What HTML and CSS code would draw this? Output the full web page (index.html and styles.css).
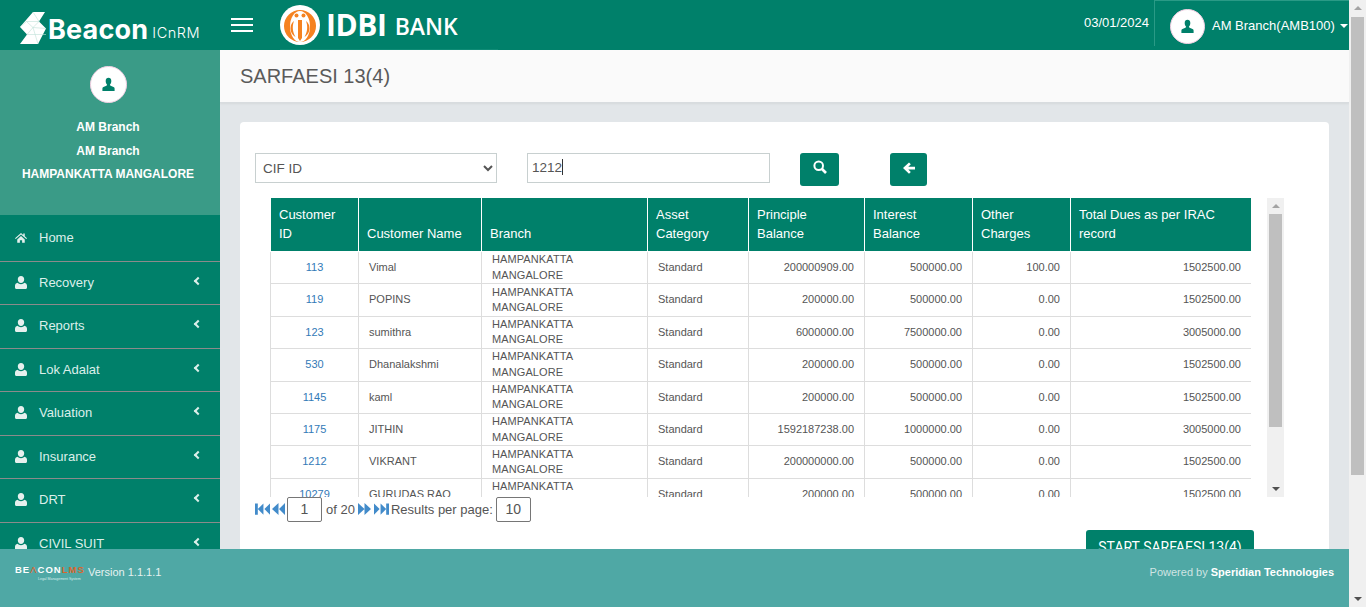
FILE: index.html
```html
<!doctype html>
<html>
<head>
<meta charset="UTF-8">
<title>SARFAESI 13(4)</title>
<link rel="stylesheet" href="styles.css">
</head>
<body>
<svg class="defs" width="0" height="0">
	<symbol id="user" viewBox="0 0 16 16"><path d="M5 4.200C5 2 6.200 .8 8 .8s3 1.200 3 3.400c0 1.700-.7 3.200-1.500 4 .1.700.5 1 1.300 1.300 1.800.6 3.700 1.100 3.700 2.700v2.800H1.500v-2.800c0-1.600 1.900-2.100 3.700-2.700.8-.3 1.200-.6 1.300-1.300C5.700 7.400 5 5.900 5 4.200z"/></symbol>
	<symbol id="user-solid" viewBox="0 0 12 13"><path d="M6 0c2 0 3.200 1.300 3.200 3.200C9.200 5.200 7.800 7 6 7S2.800 5.200 2.800 3.200C2.800 1.300 4 0 6 0zM2.500 6.800C3.300 7.700 4.600 8.200 6 8.200s2.700-.5 3.500-1.400C11 7.200 12 8.300 12 9.800V11.500c0 .9-.6 1.500-1.500 1.500h-9C.6 13 0 12.400 0 11.500V9.800c0-1.500 1-2.600 2.500-3z"/></symbol>
	<symbol id="first" viewBox="0 0 16 12"><path d="M0 0h3v12H0zM9 0v12L3 6zM16 0v12L10 6z"/></symbol>
	<symbol id="prev" viewBox="0 0 13 12"><path d="M6.500 0v12L0 6zM13 0v12L7 6z"/></symbol>
	<symbol id="next" viewBox="0 0 13 12"><path d="M0 0v12l6.500-6zM6.500 0v12L13 6z"/></symbol>
	<symbol id="last" viewBox="0 0 16 12"><path d="M0 0v12l6-6zM7 0v12l6-6zM13 0h3v12h-3z"/></symbol>
</svg>
<div class="page">
	<header class="topbar">
		<div class="brand">
			<svg class="brand-mark" viewBox="0 0 26 32">
				<path fill="#fff" d="M13 0h12l-6 9.500 7 7L18 32H0l7-9.500-7-7.500z"/>
				<path fill="none" stroke="#bfe0d8" stroke-width=".6" d="M13 0l6 9.500H6.500M6.500 9.500L0 15M6.500 9.500L13 15.500l6-6M13 15.500L26 16.500M13 15.500L7 22.500M13 15.500l5 16.500M7 22.500h19"/>
			</svg>
			<span class="brand-name">Beacon</span>
			<span class="brand-sub">ICnRM</span>
		</div>
		<div class="burger"><i></i><i></i><i></i></div>
		<div class="bank">
			<svg class="bank-mark" viewBox="0 0 40 40">
				<circle cx="20" cy="20" r="20" fill="#fff"/>
				<circle cx="20" cy="21" r="16" fill="#f58220"/>
				<ellipse cx="20" cy="21.500" rx="10" ry="15.500" fill="#fff"/>
				<path fill="#f58220" d="M14 16c-2 5-1.500 11 1.500 16-4-2.500-5-6-5-9 0-3 1.500-5.500 3.500-7zM26 16c2 5 1.500 11-1.500 16 4-2.500 5-6 5-9 0-3-1.500-5.500-3.500-7z"/>
				<path fill="#f58220" d="M18 15h4v18l-2 3-2-3z"/>
				<circle cx="16.500" cy="10.500" r="2" fill="#f58220"/>
				<circle cx="23.500" cy="10.500" r="2" fill="#f58220"/>
			</svg>
			<span class="bank-idbi">IDBI</span>
			<span class="bank-word">BANK</span>
		</div>
		<div class="date">03/01/2024</div>
		<div class="account">
			<div class="avatar avatar-small"><svg><use href="#user"/></svg></div>
			<span class="account-name">AM Branch(AMB100)</span>
			<span class="caret"></span>
		</div>
	</header>
	<div class="middle">
		<aside class="sidebar">
			<div class="profile">
				<div class="avatar"><svg><use href="#user"/></svg></div>
				<p>AM Branch</p>
				<p>AM Branch</p>
				<p>HAMPANKATTA MANGALORE</p>
			</div>
			<nav class="menu">
				<a class="menu-item menu-home">
					<svg class="menu-icon" viewBox="0 0 16 14"><path d="M8 1L0 8l1 1 7-6 7 6 1-1-3-2.600V1.500h-2v2.200zM3 9.500V14h3.500v-3.500h3V14H13V9.500L8 5z"/></svg>
					Home
				</a>
				<a class="menu-item"><svg class="menu-icon"><use href="#user-solid"/></svg>Recovery<span class="chev"></span></a>
				<a class="menu-item"><svg class="menu-icon"><use href="#user-solid"/></svg>Reports<span class="chev"></span></a>
				<a class="menu-item"><svg class="menu-icon"><use href="#user-solid"/></svg>Lok Adalat<span class="chev"></span></a>
				<a class="menu-item"><svg class="menu-icon"><use href="#user-solid"/></svg>Valuation<span class="chev"></span></a>
				<a class="menu-item"><svg class="menu-icon"><use href="#user-solid"/></svg>Insurance<span class="chev"></span></a>
				<a class="menu-item"><svg class="menu-icon"><use href="#user-solid"/></svg>DRT<span class="chev"></span></a>
				<a class="menu-item"><svg class="menu-icon"><use href="#user-solid"/></svg>CIVIL SUIT<span class="chev"></span></a>
			</nav>
		</aside>
		<main class="content">
			<div class="title-bar"><h1>SARFAESI 13(4)</h1></div>
			<section class="card">
				<div class="filters">
					<select class="field field-select"><option>CIF ID</option></select>
					<div class="field field-input">1212<span class="cursor"></span></div>
					<button class="btn btn-search">
						<svg viewBox="0 0 14 14"><circle cx="5.700" cy="5.700" r="4.300" fill="none" stroke="#fff" stroke-width="2"/><path d="M9 9l4 4" stroke="#fff" stroke-width="2.600"/></svg>
					</button>
					<button class="btn btn-back">
						<svg viewBox="0 0 14 14"><path fill="#fff" d="M7 1.500l1.800 1.800L6.300 5.700H13v2.800H6.300l2.500 2.400L7 12.700 1 7z"/></svg>
					</button>
				</div>
				<div class="grid-row">
					<div class="table-view">
						<table class="cases">
							<colgroup>
								<col class="c1"><col class="c2"><col class="c3"><col class="c4"><col class="c5"><col class="c6"><col class="c7"><col class="c8">
							</colgroup>
							<thead>
								<tr><th>Customer ID</th><th>Customer Name</th><th>Branch</th><th>Asset Category</th><th>Principle Balance</th><th>Interest Balance</th><th>Other Charges</th><th>Total Dues as per IRAC record</th></tr>
							</thead>
							<tbody>
								<tr><td class="id">113</td><td>Vimal</td><td class="branch">HAMPANKATTA MANGALORE</td><td>Standard</td><td class="num">200000909.00</td><td class="num">500000.00</td><td class="num">100.00</td><td class="num">1502500.00</td></tr>
								<tr><td class="id">119</td><td>POPINS</td><td class="branch">HAMPANKATTA MANGALORE</td><td>Standard</td><td class="num">200000.00</td><td class="num">500000.00</td><td class="num">0.00</td><td class="num">1502500.00</td></tr>
								<tr><td class="id">123</td><td>sumithra</td><td class="branch">HAMPANKATTA MANGALORE</td><td>Standard</td><td class="num">6000000.00</td><td class="num">7500000.00</td><td class="num">0.00</td><td class="num">3005000.00</td></tr>
								<tr><td class="id">530</td><td>Dhanalakshmi</td><td class="branch">HAMPANKATTA MANGALORE</td><td>Standard</td><td class="num">200000.00</td><td class="num">500000.00</td><td class="num">0.00</td><td class="num">1502500.00</td></tr>
								<tr><td class="id">1145</td><td>kaml</td><td class="branch">HAMPANKATTA MANGALORE</td><td>Standard</td><td class="num">200000.00</td><td class="num">500000.00</td><td class="num">0.00</td><td class="num">1502500.00</td></tr>
								<tr><td class="id">1175</td><td>JITHIN</td><td class="branch">HAMPANKATTA MANGALORE</td><td>Standard</td><td class="num">1592187238.00</td><td class="num">1000000.00</td><td class="num">0.00</td><td class="num">3005000.00</td></tr>
								<tr><td class="id">1212</td><td>VIKRANT</td><td class="branch">HAMPANKATTA MANGALORE</td><td>Standard</td><td class="num">200000000.00</td><td class="num">500000.00</td><td class="num">0.00</td><td class="num">1502500.00</td></tr>
								<tr><td class="id">10279</td><td>GURUDAS RAO</td><td class="branch">HAMPANKATTA MANGALORE</td><td>Standard</td><td class="num">200000.00</td><td class="num">500000.00</td><td class="num">0.00</td><td class="num">1502500.00</td></tr>
							</tbody>
						</table>
					</div>
					<div class="scroller scroller-inner">
						<span class="arrow-up"></span>
						<span class="thumb"></span>
						<span class="arrow-down"></span>
					</div>
				</div>
				<div class="pager">
					<svg class="pg pg-first"><use href="#first"/></svg>
					<svg class="pg pg-prev"><use href="#prev"/></svg>
					<span class="pg-box">1</span>
					<span class="pg-of">of 20</span>
					<svg class="pg pg-prev"><use href="#next"/></svg>
					<svg class="pg pg-first pg-last"><use href="#last"/></svg>
					<span class="pg-label">Results per page:</span>
					<span class="pg-box">10</span>
				</div>
				<div class="actions"><button class="btn-start">START SARFAESI 13(4)</button></div>
			</section>
		</main>
	</div>
	<footer class="footer">
		<div class="footer-left">
			<div class="lms">
				<span class="lms-name">BE<b>&#923;</b>CON<em>LMS</em></span>
				<span class="lms-tag">Legal Management System</span>
			</div>
			<span class="version">Version 1.1.1.1</span>
		</div>
		<div class="powered">Powered by <strong>Speridian Technologies</strong></div>
	</footer>
</div>
<div class="scroller scroller-page">
	<span class="arrow-up"></span>
	<span class="thumb"></span>
	<span class="arrow-down"></span>
</div>
</body>
</html>
```

FILE: styles.css
```css
* {
	box-sizing: border-box;
	font-family: "Liberation Sans", Arial, sans-serif;
}
html, body {
	height: 100%;
}
body {
	margin: 0;
	display: flex;
	overflow: hidden;
	color: #555555;
}
.defs {
	position: absolute;
}
.page {
	flex: 1;
	min-width: 0;
	display: flex;
	flex-direction: column;
	height: 607px;
}

/* top bar */
.topbar {
	height: 50px;
	flex: none;
	display: flex;
	align-items: center;
	background-color: #00806a;
	color: #ffffff;
}
.brand {
	width: 220px;
	flex: none;
	display: flex;
	align-items: flex-end;
	padding-left: 20px;
	height: 40px;
}
.brand-mark {
	width: 26px;
	height: 32px;
	margin-bottom: 1px;
}
.brand-name {
	font-family: Inter, sans-serif;
	font-weight: 700;
	font-size: 27px;
	line-height: 30px;
	margin-left: 2px;
	letter-spacing: 0.2px;
}
.brand-sub {
	font-family: Inter, sans-serif;
	font-weight: 300;
	font-size: 14.500px;
	line-height: 25px;
	letter-spacing: 0.5px;
	margin-left: 4px;
}
.burger {
	width: 22px;
	margin-left: 11px;
	flex: none;
}
.burger i {
	display: block;
	height: 2px;
	background-color: #ffffff;
	margin: 4px 0;
}
.bank {
	display: flex;
	align-items: center;
	margin-left: 27px;
	align-self: flex-end;
	height: 50px;
	width: 218px;
	border-bottom: 1px solid #0f8b76;
}
.bank-mark {
	width: 40px;
	height: 40px;
	flex: none;
}
.bank-idbi {
	font-family: "Open Sans", sans-serif;
	font-weight: 700;
	font-size: 30px;
	line-height: 40px;
	margin-left: 6px;
	letter-spacing: -0.4px;
}
.bank-word {
	font-family: "Open Sans", sans-serif;
	font-weight: 600;
	font-size: 23px;
	line-height: 40px;
	margin-left: 8px;
	padding-top: 3px;
}
.date {
	margin-left: auto;
	font-size: 13px;
	margin-right: 5px;
	padding-bottom: 6px;
}
.account {
	width: 195px;
	height: 46px;
	align-self: flex-start;
	flex: none;
	display: flex;
	align-items: center;
	padding-left: 15px;
	border-left: 1px solid #2a9a86;
	border-top: 1px solid #2a9a86;
}
.account-name {
	font-size: 13px;
	margin-left: 7px;
	padding-top: 3px;
	white-space: nowrap;
}
.caret {
	border-left: 4px solid transparent;
	border-right: 4px solid transparent;
	border-top: 4px solid #ffffff;
	margin-left: 5px;
	margin-top: 4px;
}
.avatar {
	width: 37px;
	height: 37px;
	border-radius: 50%;
	background-color: #ffffff;
	border: 1px solid #f3cfe3;
	display: flex;
	align-items: center;
	justify-content: center;
	margin: 0 auto;
	flex: none;
}
.avatar svg {
	width: 15px;
	height: 15px;
	fill: #00806a;
}
.avatar-small {
	width: 35px;
	height: 35px;
	margin: 5px 0 0;
}

/* sidebar */
.middle {
	flex: 1;
	min-height: 0;
	display: flex;
}
.sidebar {
	width: 220px;
	flex: none;
	overflow: hidden;
}
.profile {
	height: 165px;
	background-color: #3a9b87;
	padding: 16px 4px 0 0;
	text-align: center;
	color: #ffffff;
	font-size: 12px;
	font-weight: bold;
}
.profile p {
	margin: 0;
	line-height: 23.500px;
}
.profile .avatar {
	margin-bottom: 13px;
}
.menu {
	background-color: #00806a;
}
.menu-item {
	height: 43.500px;
	display: flex;
	align-items: center;
	padding: 0 19px 1px 15px;
	border-bottom: 1px solid #8b8b8b;
	color: #dcefea;
	font-size: 13px;
}
.menu-home {
	height: 46.500px;
	padding-top: 1px;
}
.menu-icon {
	width: 12px;
	height: 13px;
	fill: #e6f0ee;
	margin-right: 12px;
	flex: none;
}
.chev {
	margin-left: auto;
	width: 6px;
	height: 6px;
	border-left: 2px solid #dcefea;
	border-bottom: 2px solid #dcefea;
	transform: rotate(45deg);
	margin-bottom: 3px;
}

/* main area */
.content {
	flex: 1;
	min-width: 0;
	background-color: #e2e6e9;
	overflow: hidden;
}
.title-bar {
	height: 53px;
	background-color: #fafafa;
	border-bottom: 1px solid #d8dcdf;
	box-shadow: 0 1px 2px rgba(0, 0, 0, 0.06);
	padding-left: 20px;
}
.title-bar h1 {
	margin: 0;
	font-size: 20px;
	font-weight: normal;
	line-height: 52px;
	color: #5a5a5a;
}
.card {
	margin: 19px 20px 0;
	background-color: #ffffff;
	border-radius: 4px;
	padding: 31px 15px 0;
	height: 470px;
}
.filters {
	display: flex;
	align-items: flex-start;
	height: 45px;
}
.field {
	height: 30px;
	border: 1px solid #c8d0d0;
	background-color: #ffffff;
	color: #555555;
	font-size: 13.500px;
}
.field-select {
	width: 242px;
	padding-left: 3px;
	border-radius: 0;
}
.field-input {
	width: 243px;
	margin-left: 30px;
	padding-left: 4px;
	line-height: 28px;
}
.cursor {
	display: inline-block;
	width: 1px;
	height: 16px;
	background-color: #333333;
	vertical-align: -3px;
}
.btn {
	height: 33px;
	background-color: #00806a;
	border: 0;
	border-radius: 3px;
	padding: 0;
}
.btn svg {
	width: 14px;
	height: 14px;
}
.btn-search {
	width: 39px;
	margin-left: 30px;
	padding-bottom: 2px;
}
.btn-back {
	width: 37px;
	margin-left: 51px;
}
.grid-row {
	display: flex;
	align-items: flex-start;
	padding-left: 15px;
}
.table-view {
	width: 981px;
	height: 299px;
	overflow: hidden;
}
.cases {
	width: 981px;
	border-collapse: collapse;
	table-layout: fixed;
}
.c1 { width: 88px; }
.c2 { width: 123px; }
.c3 { width: 166px; }
.c4 { width: 101px; }
.c5 { width: 116px; }
.c6 { width: 108px; }
.c7 { width: 98px; }
.c8 { width: 181px; }
.cases th {
	background-color: #00806a;
	color: #ffffff;
	font-size: 13px;
	font-weight: normal;
	line-height: 19px;
	text-align: left;
	vertical-align: bottom;
	padding: 7px 8px 8px;
	border: 1px solid #ffffff;
	border-top: 0;
	height: 53px;
}
.cases td {
	font-size: 11px;
	line-height: 15.500px;
	height: 32.400px;
	padding: 0 10px;
	border: 1px solid #dddddd;
	color: #555555;
}
.cases td.id {
	text-align: center;
	color: #337ab7;
	padding: 0;
}
.cases td.num {
	text-align: right;
}
.cases td.branch {
	padding: 0 30px 0 10px;
	letter-spacing: 0.100px;
}
.scroller {
	background-color: #f0f0f0;
	display: flex;
	flex-direction: column;
	align-items: center;
	flex: none;
}
.scroller-inner {
	width: 17px;
	height: 299px;
	margin-left: 16px;
}
.scroller-page {
	width: 17px;
	height: 607px;
}
.thumb {
	background-color: #bfbfbf;
	width: 13px;
}
.scroller-inner .thumb {
	height: 213px;
	margin-top: 6px;
}
.scroller-page .thumb {
	height: 458px;
	margin-top: 7px;
}
.arrow-up {
	margin-top: 6px;
	border-left: 4px solid transparent;
	border-right: 4px solid transparent;
	border-bottom: 4px solid #a3a3a3;
}
.arrow-down {
	margin-top: auto;
	margin-bottom: 6px;
	border-left: 4px solid transparent;
	border-right: 4px solid transparent;
	border-top: 4px solid #505050;
}
.pager {
	display: flex;
	align-items: center;
	gap: 2px;
	height: 26px;
	margin-top: -1px;
	font-size: 13px;
}
.pg {
	height: 12px;
	fill: #428bca;
	flex: none;
}
.pg-first {
	width: 15px;
}
.pg-prev {
	width: 13px;
}
.pg-last {
	margin-left: 1px;
}
.pg-of {
	margin: 0 1px 0 2px;
}
.pg-label {
	margin-right: 1px;
}
.pg-box {
	width: 35px;
	height: 25px;
	border: 1px solid #767676;
	border-radius: 2px;
	text-align: center;
	line-height: 23px;
	font-size: 14px;
	color: #555555;
}
.actions {
	display: flex;
	justify-content: flex-end;
	padding-right: 60px;
	margin-top: 8px;
}
.btn-start {
	width: 168px;
	height: 34px;
	background-color: #00806a;
	color: #ffffff;
	border: 0;
	border-radius: 3px 3px 0 0;
	font-family: Roboto, sans-serif;
	font-size: 14px;
}

/* footer */
.footer {
	height: 58px;
	flex: none;
	background-color: #4fa8a5;
	display: flex;
	justify-content: space-between;
	padding: 15px 15px 0;
	font-size: 11px;
}
.footer-left {
	display: flex;
	align-items: flex-start;
}
.lms {
	width: 73px;
}
.lms-name {
	display: block;
	font-size: 9.500px;
	font-weight: bold;
	letter-spacing: 1px;
	color: #ffffff;
	line-height: 12px;
	white-space: nowrap;
}
.lms-name b {
	color: #e8622a;
	font-weight: normal;
}
.lms-name em {
	font-style: normal;
	color: #d9662b;
}
.lms-tag {
	display: block;
	font-size: 3.500px;
	color: #d8eeec;
	margin-left: 23px;
	white-space: nowrap;
	line-height: 5px;
	margin-top: 1px;
}
.version {
	color: #e6f2f1;
	line-height: 16px;
}
.powered {
	color: #d0e4e3;
	line-height: 14px;
	padding-top: 1px;
}
.powered strong {
	color: #ffffff;
}
```
